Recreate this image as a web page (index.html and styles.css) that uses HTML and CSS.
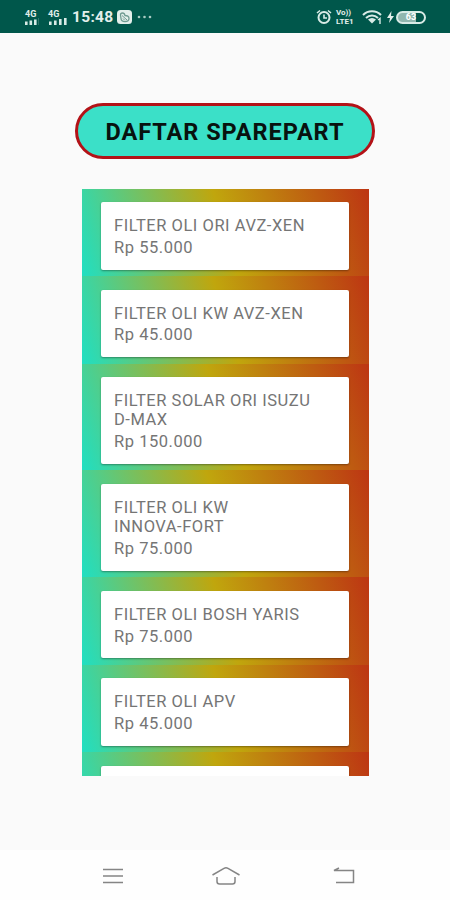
FILE: index.html
```html
<!DOCTYPE html>
<html lang="id">
<head>
    <meta charset="UTF-8">
    <meta name="viewport" content="width=device-width, initial-scale=1.0">
    <title>Daftar Sparepart</title>
    <link rel="stylesheet" href="styles.css">
</head>
<body>
    <header class="status-bar">
        <div class="status-left">
            <div class="signal">
                <span>4G</span>
                <svg width="14" height="7" viewBox="0 0 14 7"><path d="M0 3.5h2.6V7H0zM4.500 2.5h2.6V7H4.500zM9 1.5h2.6V7H9z" fill="#d8ebe6"/><path d="M13 0h1v7h-1z" fill="#2d7568"/></svg>
            </div>
            <div class="signal signal-second">
                <span>4G</span>
                <svg width="19" height="7" viewBox="0 0 19 7"><path d="M1 3.5h2.6V7H1zM6 2.5h2.6V7H6zM11 1h2.6v6H11zM16 0h2.6v7H16z" fill="#d8ebe6"/></svg>
            </div>
            <span class="clock">15:48</span>
            <svg class="app-icon" width="15" height="14" viewBox="0 0 15 14"><rect width="15" height="14" rx="3.5" fill="#e3efeb"/><path d="M3.500 5q0-2 2-2t2.500 2.500q4 0 4 3t-4 3-4-3z" fill="none" stroke="#6f9b91" stroke-width="1.300"/><path d="M5 5.500l5 4.500M6 8.500l1.500 1.500" stroke="#6f9b91"/></svg>
            <svg class="dots" width="16" height="4" viewBox="0 0 16 4" fill="#a9cbc3"><circle cx="2" cy="2" r="1.300"/><circle cx="7.500" cy="2" r="1.300"/><circle cx="13" cy="2" r="1.300"/></svg>
        </div>
        <div class="status-right">
            <svg width="16" height="16" viewBox="0 0 16 16" fill="none" stroke="#d8ebe6" stroke-width="2"><circle cx="8" cy="8.500" r="5.500"/><path d="M8 5.500V9h3M1 4l3-2.500M15 4l-3-2.500" stroke-width="1.600"/></svg>
            <div class="volte"><span>Vo))</span><span>LTE1</span></div>
            <svg class="wifi" width="21" height="14" viewBox="0 0 21 14" fill="none" stroke="#d8ebe6" stroke-width="2"><path d="M1 5c5-5 13-5 18 0M4 8c3.500-3.500 8.500-3.500 12 0"/><path d="M6 9.500c2.500-2 5.500-2 8 0L10 13.500z" fill="#d8ebe6" stroke="none"/><path d="M16 10l2-1.500V14" stroke-width="1.400"/></svg>
            <svg class="bolt" width="7" height="12" viewBox="0 0 7 12"><path d="M4.500 0L0 7h3l-1 5 5-7H4z" fill="#e3efeb"/></svg>
            <div class="battery"><span>63</span></div>
        </div>
    </header>

    <main class="content">
        <h1 class="title">DAFTAR SPAREPART</h1>
        <div class="list">
            <div class="item">
                <div class="card">
                    <p class="name">FILTER OLI ORI AVZ-XEN</p>
                    <p class="price">Rp 55.000</p>
                </div>
            </div>
            <div class="item">
                <div class="card">
                    <p class="name">FILTER OLI KW AVZ-XEN</p>
                    <p class="price">Rp 45.000</p>
                </div>
            </div>
            <div class="item item-tall">
                <div class="card">
                    <p class="name">FILTER SOLAR ORI ISUZU<br>D-MAX</p>
                    <p class="price">Rp 150.000</p>
                </div>
            </div>
            <div class="item item-tall">
                <div class="card">
                    <p class="name">FILTER OLI KW<br>INNOVA-FORT</p>
                    <p class="price">Rp 75.000</p>
                </div>
            </div>
            <div class="item">
                <div class="card">
                    <p class="name">FILTER OLI BOSH YARIS</p>
                    <p class="price">Rp 75.000</p>
                </div>
            </div>
            <div class="item">
                <div class="card">
                    <p class="name">FILTER OLI APV</p>
                    <p class="price">Rp 45.000</p>
                </div>
            </div>
            <div class="item">
                <div class="card"></div>
            </div>
        </div>
    </main>

    <nav class="nav-bar">
        <svg width="22" height="18" viewBox="0 0 22 18" fill="none" stroke="#858585" stroke-width="1.500"><path d="M1 2.500h20M1 9h20M1 15.500h20"/></svg>
        <svg width="30" height="20" viewBox="0 0 30 20" fill="none" stroke="#858585" stroke-width="1.500"><path d="M1.500 9L13 2.300q2-1.100 4 0L28.500 9M6 11v4.500q0 2.500 2.500 2.500h13q2.500 0 2.500-2.500V11"/></svg>
        <svg class="back" width="23" height="18" viewBox="0 0 23 18" fill="none" stroke="#858585" stroke-width="1.500"><path d="M7 1L2 3.500h19.500v12H4"/></svg>
    </nav>
</body>
</html>
```
FILE: styles.css
```css
body {
    font-family: Roboto, sans-serif;
    background-color: #fafafa;
    margin: 0;
    height: 900px;
    display: flex;
    flex-direction: column;
    overflow: hidden;
}

svg {
    display: block;
    flex: none;
}

.status-bar {
    background-color: #00574b;
    box-sizing: border-box;
    height: 32.5px;
    padding: 2px 24px 0 25px;
    display: flex;
    justify-content: space-between;
    align-items: center;
    color: #e3efeb;
    flex: none;
}

.status-left, .status-right {
    display: flex;
    align-items: center;
}

.signal span {
    display: block;
    font-size: 9px;
    font-weight: bold;
    line-height: 8px;
}

.signal-second {
    margin-left: 9px;
}

.clock {
    font-size: 15.5px;
    font-weight: bold;
    letter-spacing: 0.3px;
    margin-left: 5px;
}

.app-icon {
    margin-left: 4px;
}

.dots {
    margin-left: 5px;
}

.volte {
    margin-left: 4px;
    width: 21px;
    font-size: 8px;
    font-weight: bold;
    line-height: 9px;
}

.volte span {
    display: block;
}

.wifi {
    margin-left: 5px;
}

.bolt {
    margin-left: 4px;
}

.battery {
    box-sizing: border-box;
    width: 30px;
    height: 13px;
    margin-left: 2px;
    border: 2px solid #d8ebe6;
    border-radius: 7px;
    background: linear-gradient(to right, #91b7af 70%, #00574b 70%);
    font-size: 9px;
    font-weight: bold;
    line-height: 9px;
    text-align: center;
    color: #fff;
}

.content {
    flex: 1;
    display: flex;
    flex-direction: column;
    align-items: center;
    padding-top: 70.5px;
}

.title {
    box-sizing: border-box;
    width: 300px;
    height: 56px;
    margin: 0 0 29.5px;
    border: 3px solid #b31217;
    border-radius: 28px;
    background-color: #3be0c8;
    font-size: 23.5px;
    font-weight: bold;
    line-height: 53px;
    letter-spacing: 0.95px;
    text-align: center;
    white-space: nowrap;
    color: #08120f;
}

.list {
    width: 287px;
    height: 587px;
    overflow: hidden;
}

.item {
    box-sizing: border-box;
    height: 87.5px;
    padding: 13.5px 19.5px 6.5px;
    background: linear-gradient(73deg, #20dfc2, #c0a60d 50%, #bd3513);
}

.item-tall {
    height: 106.8px;
    background: linear-gradient(69.6deg, #20dfc2, #c0a60d 50%, #bd3513);
}

.card {
    box-sizing: border-box;
    height: 100%;
    padding: 14px 13px 0;
    border-radius: 2px;
    background-color: #fff;
    box-shadow: 0 1px 2px rgba(0,0,0,0.35);
    font-size: 16.5px;
    line-height: 19.3px;
    letter-spacing: 0.54px;
    white-space: nowrap;
    color: #757575;
}

.card p {
    margin: 0;
}

.card .price {
    margin-top: 2.7px;
}

.nav-bar {
    background-color: #fefefe;
    height: 49px;
    display: flex;
    justify-content: center;
    align-items: center;
    gap: 87px;
    padding: 1px 0 0 6px;
    flex: none;
}

.back {
    margin-left: 4px;
}
```
